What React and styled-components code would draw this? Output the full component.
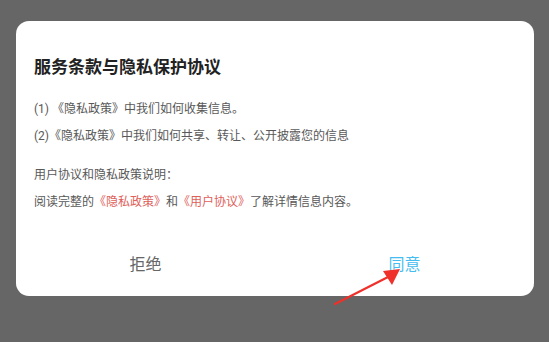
import React from 'react'
import styled, { createGlobalStyle } from 'styled-components'

const GlobalStyle = createGlobalStyle`
  html, body {
    margin: 0;
    padding: 0;
    background: #666666;
  }
  body {
    font-family: Roboto, "Noto Sans CJK SC", sans-serif;
  }
`;

const Screen = styled.div`
  position: relative;
  width: 549px;
  height: 342px;
  background: #666666;
  padding: 21px 15px 0 16px;
  box-sizing: border-box;
  overflow: hidden;
`;

const Dialog = styled.div`
  background: #fff;
  border-radius: 13px;
  height: 275px;
  box-sizing: border-box;
  padding-top: 34px;
  display: flex;
  flex-direction: column;
`;

const Body = styled.div`
  padding: 0 18px;
  flex: 1;
`;

const Title = styled.h2`
  margin: 0 0 17px;
  font-size: 17px;
  line-height: 24px;
  font-weight: 700;
  color: #222;
`;

const Group = styled.div`
  margin-bottom: ${props => props.gap || 0}px;
`;

const Line = styled.p`
  margin: 0;
  font-size: 12px;
  line-height: 27px;
  color: #585858;
  white-space: nowrap;
`;

const Link = styled.span`
  color: #e0605a;
`;

const Actions = styled.div`
  display: flex;
  height: 50px;
  margin-bottom: 8px;
`;

const Action = styled.button`
  flex: 1;
  border: none;
  background: none;
  font-family: inherit;
  font-size: 16px;
  color: ${props => (props.primary ? '#45bdf0' : '#666')};
  cursor: pointer;
`;

const Arrow = styled.svg`
  position: absolute;
  left: 0;
  top: 0;
  pointer-events: none;
`;

const App = () => {
  return (
    <Screen>
      <GlobalStyle />
      <Dialog>
        <Body>
          <Title>服务条款与隐私保护协议</Title>
          <Group gap={12}>
            <Line>(1) 《隐私政策》中我们如何收集信息。</Line>
            <Line>(2)《隐私政策》中我们如何共享、转让、公开披露您的信息</Line>
          </Group>
          <Group>
            <Line>用户协议和隐私政策说明：</Line>
            <Line>
              阅读完整的<Link>《隐私政策》</Link>和<Link>《用户协议》</Link>了解详情信息内容。
            </Line>
          </Group>
        </Body>
        <Actions>
          <Action>拒绝</Action>
          <Action primary>同意</Action>
        </Actions>
      </Dialog>
      <Arrow width="549" height="342" viewBox="0 0 549 342">
        <line x1="335" y1="304" x2="390" y2="276" stroke="#f0302a" strokeWidth="2.2" strokeLinecap="round" />
        <polygon points="400,269 383,271 392,285" fill="#f0302a" />
      </Arrow>
    </Screen>
  )
}

export default App
